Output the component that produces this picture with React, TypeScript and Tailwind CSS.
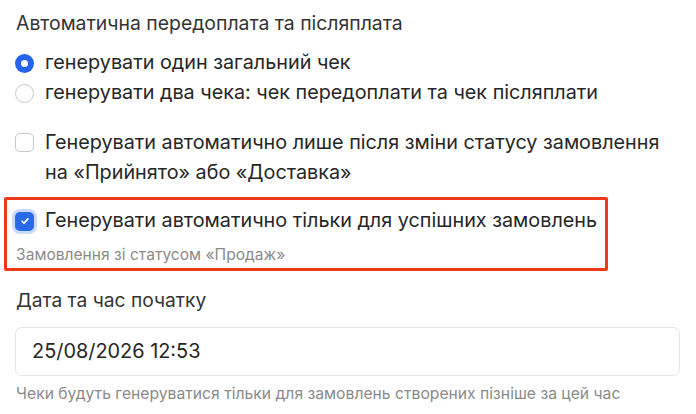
import React, { useState } from 'react';

const Radio: React.FC<{ checked: boolean; label: string; onClick: () => void }> = ({ checked, label, onClick }) => (
  <label onClick={onClick} className="flex h-[30px] cursor-pointer items-center gap-[11px] pl-[15px]">
    {checked ? (
      <span className="flex h-[19px] w-[19px] items-center justify-center rounded-full bg-[#2563eb]">
        <span className="h-[7px] w-[7px] rounded-full bg-white" />
      </span>
    ) : (
      <span className="h-[19px] w-[19px] rounded-full border border-[#c8c8c8] bg-white" />
    )}
    <span>{label}</span>
  </label>
);

export default function App() {
  const [mode, setMode] = useState<'one' | 'two'>('one');
  const [afterStatus, setAfterStatus] = useState(false);
  const [onlySuccess, setOnlySuccess] = useState(true);

  return (
    <div
      className="h-[414px] w-[696px] overflow-hidden bg-white text-[19.8px] text-[#262626]"
      style={{ fontFamily: 'Inter, "Noto Sans", sans-serif' }}
    >
      {/* Заголовок групи */}
      <div className="pl-[16px] pt-[11px] text-[19.4px] leading-[24px] text-[#333]">Автоматична передоплата та післяплата</div>

      <div className="mt-[13px]">
        <Radio checked={mode === 'one'} label="генерувати один загальний чек" onClick={() => setMode('one')} />
        <Radio
          checked={mode === 'two'}
          label="генерувати два чека: чек передоплати та чек післяплати"
          onClick={() => setMode('two')}
        />
      </div>

      <label
        onClick={() => setAfterStatus(!afterStatus)}
        className="mt-[19px] flex cursor-pointer items-start gap-[11px] pl-[15px] leading-[30px]"
      >
        <span className="mt-[6px] h-[19px] w-[19px] shrink-0 rounded-[5px] border border-[#c8c8c8] bg-white" />
        <span>
          Генерувати автоматично лише після зміни статусу замовлення
          <br />
          на «Прийнято» або «Доставка»
        </span>
      </label>

      {/* Виділений блок */}
      <div className="ml-[4px] mt-[10px] w-[604px] rounded-[2px] border-[3px] border-[#f0381a] pb-[3px] pl-[8px] pt-[6px]">
        <label
          onClick={() => setOnlySuccess(!onlySuccess)}
          className="flex h-[30px] cursor-pointer items-center gap-[11px]"
        >
          <span className="flex h-[19px] w-[19px] items-center justify-center rounded-[5px] bg-[#2a6ae8] ring-[3px] ring-[#c9dafb]">
            {onlySuccess && (
              <svg viewBox="0 0 12 12" className="h-[10px] w-[10px]" fill="none">
                <path d="M2.5 6.3l2.3 2.2 4.7-5" stroke="white" strokeWidth="2" strokeLinecap="round" strokeLinejoin="round" />
              </svg>
            )}
          </span>
          <span>Генерувати автоматично тільки для успішних замовлень</span>
        </label>
        <div className="mt-[9px] pl-[1px] text-[15.6px] leading-[20px] text-[#8a8a8a]">Замовлення зі статусом «Продаж»</div>
      </div>

      <div className="mt-[17px] pl-[16px] text-[19.2px] leading-[24px] text-[#333]">Дата та час початку</div>

      <div className="ml-[15px] mt-[15px] flex h-[49px] w-[665px] items-center rounded-[7px] border border-[#e3e3e3] pl-[16px] text-[19.9px]">
        25/08/2026 12:53
      </div>

      <div className="mt-[8px] pl-[16px] text-[15.7px] leading-[20px] text-[#8a8a8a]">
        Чеки будуть генеруватися тільки для замовлень створених пізніше за цей час
      </div>
    </div>
  );
}
